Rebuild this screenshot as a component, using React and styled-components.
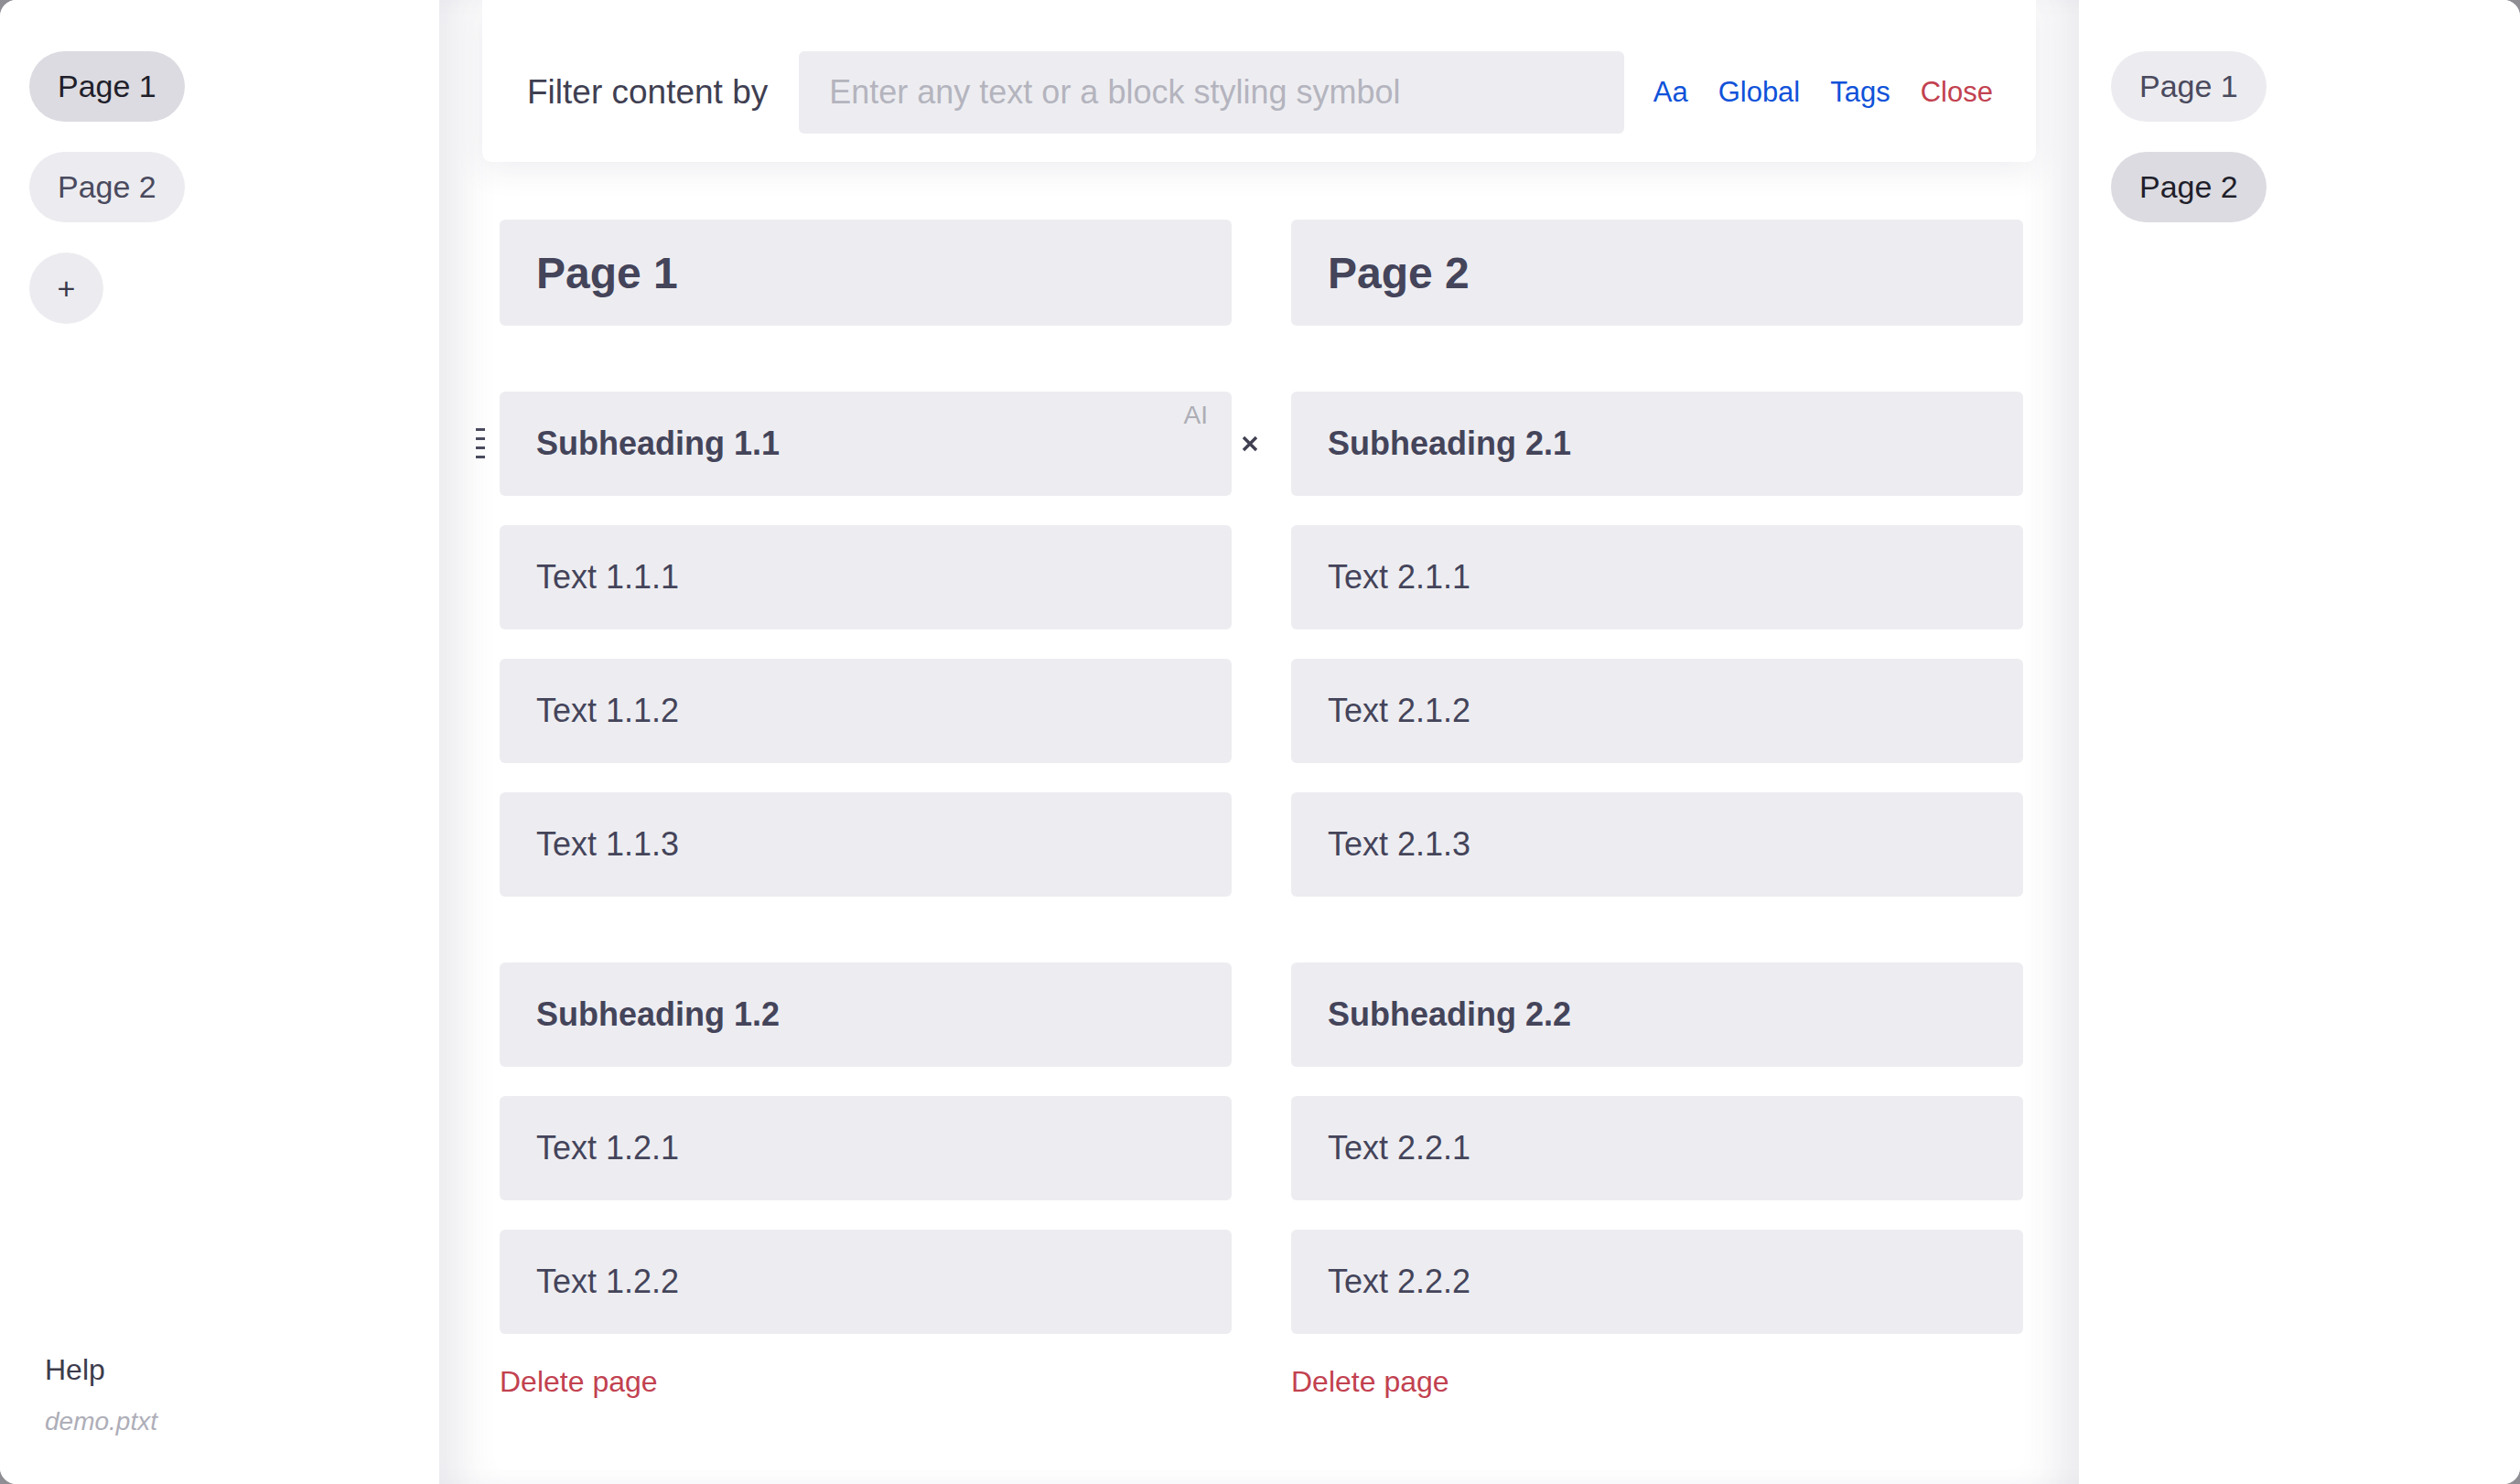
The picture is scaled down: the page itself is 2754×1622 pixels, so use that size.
import React from "react";
import styled, { createGlobalStyle } from "styled-components";

const GlobalStyle = createGlobalStyle`
  html, body {
    margin: 0;
    padding: 0;
    background: #8e8e94;
  }
  * {
    box-sizing: border-box;
  }
`;

const Window = styled.div`
  display: grid;
  grid-template-columns: 480px 1fr 482px;
  height: 100vh;
  overflow: hidden;
  background: #ffffff;
  border-radius: 18px;
  font-family: "Liberation Sans", Arial, sans-serif;
`;

const Sidebar = styled.aside`
  display: flex;
  flex-direction: column;
  justify-content: space-between;
  padding: 56px 32px 51px ${(p) => (p.right ? "35px" : "32px")};
  background: #ffffff;
`;

const PillList = styled.div`
  display: flex;
  flex-direction: column;
  align-items: flex-start;
  gap: 33px;
`;

const Pill = styled.button`
  height: 77px;
  padding: 0 31px;
  border: none;
  border-radius: 40px;
  font-family: inherit;
  font-size: 34px;
  background: ${(p) => (p.active ? "#dcdbe1" : "#ececf0")};
  color: ${(p) => (p.active ? "#1f1f2b" : "#4a4a5e")};
  cursor: pointer;
`;

const RoundButton = styled(Pill)`
  width: 81px;
  height: 78px;
  padding: 0;
  border-radius: 50%;
  font-size: 34px;
  color: #3a3a4c;
`;

const SideFooter = styled.div`
  display: flex;
  flex-direction: column;
  gap: 21px;
  padding-left: 17px;
`;

const HelpLink = styled.div`
  font-size: 32px;
  line-height: 1.2;
  color: #3c3c4c;
`;

const FileName = styled.div`
  font-size: 28px;
  line-height: 1.2;
  font-style: italic;
  color: #aeaeb8;
`;

const Main = styled.main`
  display: flex;
  flex-direction: column;
  padding: 0 47px;
  background: #ffffff;
  box-shadow: inset 44px 0 40px -20px rgba(60, 60, 100, 0.1),
    inset -44px 0 40px -20px rgba(60, 60, 100, 0.1);
  overflow: hidden;
`;

const FilterCard = styled.div`
  display: flex;
  align-items: center;
  padding: 56px 47px 31px 49px;
  background: #ffffff;
  border-radius: 0 0 10px 10px;
  box-shadow: 0 10px 34px rgba(50, 50, 90, 0.08);
`;

const FilterLabel = styled.span`
  font-size: 37px;
  color: #3f3f52;
  white-space: nowrap;
`;

const FilterInput = styled.input`
  flex: 1;
  height: 90px;
  margin-left: 34px;
  padding: 0 33px;
  border: none;
  border-radius: 6px;
  background: #ededf1;
  font-family: inherit;
  font-size: 36px;
  color: #3f3f52;
  outline: none;

  &::placeholder {
    color: #b4b4be;
  }
`;

const LinkRow = styled.div`
  display: flex;
  gap: 33px;
  margin-left: 32px;
`;

const ActionLink = styled.span`
  font-size: 31px;
  color: ${(p) => (p.danger ? "#c2414f" : "#0f52d9")};
  cursor: pointer;
`;

const Columns = styled.div`
  display: grid;
  grid-template-columns: 1fr 1fr;
  column-gap: 65px;
  margin: 63px 14px 0 19px;
`;

const PageColumn = styled.div`
  display: flex;
  flex-direction: column;
  gap: 32px;
`;

const Block = styled.div`
  position: relative;
  display: flex;
  align-items: center;
  min-height: ${(p) => (p.kind === "title" ? "116px" : "114px")};
  margin-top: ${(p) => (p.kind === "sub" ? "40px" : "0")};
  padding: 0 40px;
  border-radius: 6px;
  background: #ededf1;
  color: #44445a;
  font-size: ${(p) => (p.kind === "title" ? "48px" : "36px")};
  font-weight: ${(p) => (p.kind === "text" ? 400 : 700)};
`;

const AiBadge = styled.span`
  position: absolute;
  top: 10px;
  right: 26px;
  font-size: 28px;
  font-weight: 400;
  color: #adadb5;
`;

const DragHandle = styled.svg`
  position: absolute;
  left: -26px;
  top: 40px;
`;

const RemoveIcon = styled.svg`
  position: absolute;
  left: calc(100% + 11px);
  top: 48px;
`;

const DeleteLink = styled.span`
  margin-top: 1px;
  font-size: 32px;
  line-height: 1.2;
  color: #c2414f;
  cursor: pointer;
`;

const pages = [
  {
    title: "Page 1",
    sections: [
      { heading: "Subheading 1.1", texts: ["Text 1.1.1", "Text 1.1.2", "Text 1.1.3"] },
      { heading: "Subheading 1.2", texts: ["Text 1.2.1", "Text 1.2.2"] },
    ],
  },
  {
    title: "Page 2",
    sections: [
      { heading: "Subheading 2.1", texts: ["Text 2.1.1", "Text 2.1.2", "Text 2.1.3"] },
      { heading: "Subheading 2.2", texts: ["Text 2.2.1", "Text 2.2.2"] },
    ],
  },
];

const Handle = () => (
  <DragHandle width="10" height="33" viewBox="0 0 10 33">
    {[0, 10, 20, 30].map((y) => (
      <rect key={y} x="0" y={y} width="10" height="3" fill="#4a4a5e" />
    ))}
  </DragHandle>
);

const Remove = () => (
  <RemoveIcon width="18" height="18" viewBox="0 0 18 18">
    <path d="M2 2 L16 16 M16 2 L2 16" stroke="#404052" strokeWidth="3.4" strokeLinecap="butt" />
  </RemoveIcon>
);

const PageView = ({ page, hovered }) => (
  <PageColumn>
    <Block kind="title">{page.title}</Block>
    {page.sections.map((section, si) => (
      <React.Fragment key={section.heading}>
        <Block kind="sub">
          {section.heading}
          {hovered && si === 0 && (
            <>
              <AiBadge>AI</AiBadge>
              <Handle />
              <Remove />
            </>
          )}
        </Block>
        {section.texts.map((t) => (
          <Block kind="text" key={t}>
            {t}
          </Block>
        ))}
      </React.Fragment>
    ))}
    <DeleteLink>Delete page</DeleteLink>
  </PageColumn>
);

const App = () => {
  return (
    <>
      <GlobalStyle />
      <Window>
        <Sidebar>
          <PillList>
            <Pill active>Page 1</Pill>
            <Pill>Page 2</Pill>
            <RoundButton>+</RoundButton>
          </PillList>
          <SideFooter>
            <HelpLink>Help</HelpLink>
            <FileName>demo.ptxt</FileName>
          </SideFooter>
        </Sidebar>

        <Main>
          <FilterCard>
            <FilterLabel>Filter content by</FilterLabel>
            <FilterInput placeholder="Enter any text or a block styling symbol" />
            <LinkRow>
              <ActionLink>Aa</ActionLink>
              <ActionLink>Global</ActionLink>
              <ActionLink>Tags</ActionLink>
              <ActionLink danger>Close</ActionLink>
            </LinkRow>
          </FilterCard>
          <Columns>
            {pages.map((page, i) => (
              <PageView key={page.title} page={page} hovered={i === 0} />
            ))}
          </Columns>
        </Main>

        <Sidebar right>
          <PillList>
            <Pill>Page 1</Pill>
            <Pill active>Page 2</Pill>
          </PillList>
        </Sidebar>
      </Window>
    </>
  );
};

export default App;
